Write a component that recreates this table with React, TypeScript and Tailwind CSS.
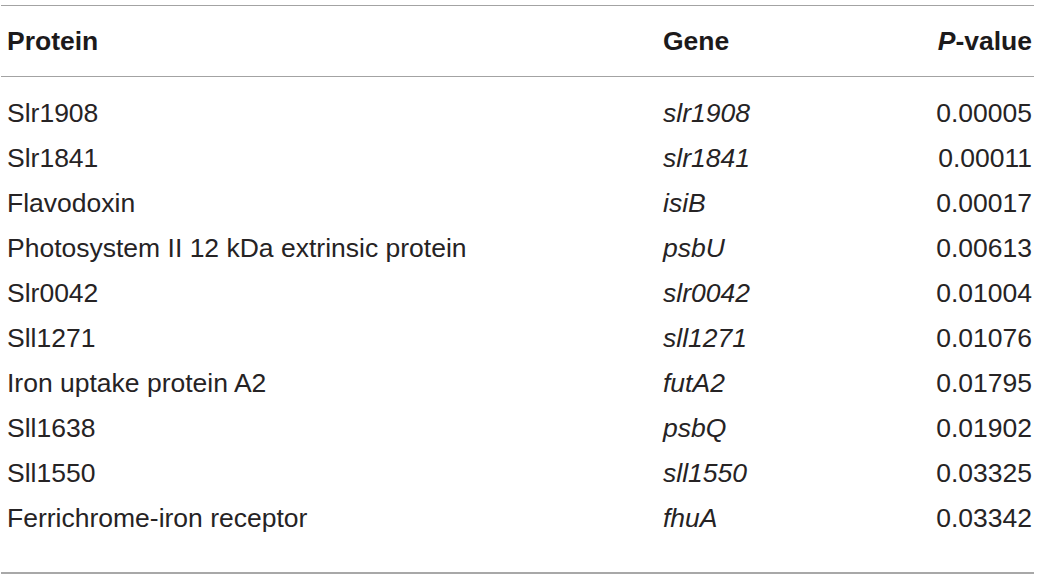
const rows = [
  { protein: "Slr1908", gene: "slr1908", p: "0.00005" },
  { protein: "Slr1841", gene: "slr1841", p: "0.00011" },
  { protein: "Flavodoxin", gene: "isiB", p: "0.00017" },
  { protein: "Photosystem II 12 kDa extrinsic protein", gene: "psbU", p: "0.00613" },
  { protein: "Slr0042", gene: "slr0042", p: "0.01004" },
  { protein: "Sll1271", gene: "sll1271", p: "0.01076" },
  { protein: "Iron uptake protein A2", gene: "futA2", p: "0.01795" },
  { protein: "Sll1638", gene: "psbQ", p: "0.01902" },
  { protein: "Sll1550", gene: "sll1550", p: "0.03325" },
  { protein: "Ferrichrome-iron receptor", gene: "fhuA", p: "0.03342" },
];

export default function App() {
  return (
    <div className="w-[1039px] h-[580px] bg-white pt-[5px] pl-[1px] font-['Liberation_Sans',Arial,sans-serif] text-[#262324] text-[26.5px]">
      <div className="w-[1033px] border-t border-[#a3a3a3]">
        {/* Header */}
        <div className="flex items-center h-[71px] pt-[2px] font-bold text-[#1c1a1b] border-b border-[#a3a3a3]">
          <div className="w-[662px] pl-[6px]">Protein</div>
          <div className="flex-1">Gene</div>
          <div className="pr-[2px]">
            <i>P</i>-value
          </div>
        </div>

        {/* Body */}
        <div className="pt-[14px] pb-[31px] border-b-2 border-[#a8a8a8]">
          {rows.map((r) => (
            <div key={r.protein} className="flex items-center h-[45px]">
              <div className="w-[662px] pl-[6px]">{r.protein}</div>
              <div className="flex-1 italic">{r.gene}</div>
              <div className="pr-[2px]">{r.p}</div>
            </div>
          ))}
        </div>
      </div>
    </div>
  );
}
